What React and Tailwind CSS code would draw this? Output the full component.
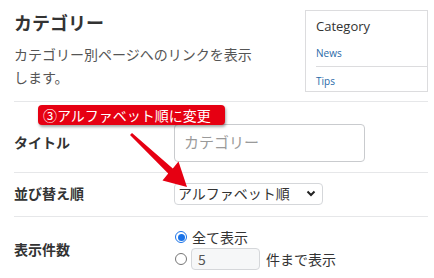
const jp = { fontFamily: '"Noto Sans CJK JP", "Noto Sans", sans-serif' };

const Radio = ({ checked }) => (
  <span
    className={
      checked
        ? "w-[12px] h-[12px] rounded-full border-[1.5px] border-[#1a73e8] flex items-center justify-center bg-white shrink-0"
        : "w-[12px] h-[12px] rounded-full border border-[#767676] bg-white shrink-0"
    }
  >
    {checked && <span className="w-[7px] h-[7px] rounded-full bg-[#1a73e8]" />}
  </span>
);

export default function App() {
  return (
    <div
      className="relative w-[434px] h-[278px] overflow-hidden bg-white pl-[14px] pr-[6px] text-[#333]"
      style={jp}
    >
      {/* HEADER */}
      <div className="flex justify-between h-[101px]">
        <div className="w-[240px] pt-[8px]">
          <h1 className="text-[18px] leading-[28px] font-bold text-[#333]">カテゴリー</h1>
          <p className="mt-[7px] text-[14px] leading-[23px] text-[#555]">
            カテゴリー別ページへのリンクを表示します。
          </p>
        </div>

        {/* PREVIEW */}
        <div
          className="mt-[10px] w-[123px] h-[82px] border border-[#dcdcde] bg-white"
          style={{ fontFamily: '"Open Sans", "Noto Sans", sans-serif' }}
        >
          <div className="pl-[10px] pt-[5px] text-[13px] leading-[20px] text-[#333]">Category</div>
          <ul className="pl-[10px] mt-[10px]">
            <li className="text-[10px] leading-[14px] text-[#2a6aa8] pb-[6px] border-b border-[#dcdcde]">
              News
            </li>
            <li className="text-[10px] leading-[14px] text-[#2a6aa8] pt-[7px]">Tips</li>
          </ul>
        </div>
      </div>

      {/* ROWS */}
      <div className="border-t border-[#e6e7e9] flex items-center h-[71px] pt-[21px] pb-[10px]">
        <div className="w-[160px] text-[14px] font-bold">タイトル</div>
        <div className="w-[191px] h-[38px] border border-[#c9cbce] rounded-[4px] flex items-center px-[9px] text-[15px] text-[#9a9a9a]">
          カテゴリー
        </div>
      </div>

      <div className="border-t border-[#e6e7e9] flex items-center h-[44px] pt-[9px] pb-[11px]">
        <div className="w-[160px] text-[14px] font-bold">並び替え順</div>
        <div className="w-[149px] h-[22px] border border-[#d5d7da] rounded-[4px] flex items-center justify-between pl-[3px] pr-[6px] text-[14px] text-[#333]">
          <span>アルファベット順</span>
          <svg width="10" height="7" viewBox="0 0 10 7">
            <path d="M1.5 1.5 L5 5 L8.5 1.5" fill="none" stroke="#222" strokeWidth="2" />
          </svg>
        </div>
      </div>

      <div className="border-t border-[#e6e7e9] flex items-center pt-[11px]">
        <div className="w-[160px] text-[14px] font-bold">表示件数</div>
        <div className="flex flex-col">
          <label className="flex items-center h-[18px] gap-[5px] pl-[1px] text-[14px]">
            <Radio checked />
            <span>全て表示</span>
          </label>
          <label className="flex items-center mt-[2px] gap-[4px] pl-[1px] text-[14px]">
            <Radio />
            <span className="w-[69px] h-[22px] border border-[#d5d7da] rounded-[4px] bg-[#f6f7f8] flex items-center px-[6px] text-[#555]">
              5
            </span>
            <span className="ml-[2px]">件まで表示</span>
          </label>
        </div>
      </div>

      {/* CALLOUT */}
      <div className="absolute left-[38px] top-[105px] w-[187px] h-[20px] rounded-[4px] bg-[#e60012] shadow-[1px_2px_3px_rgba(0,0,0,0.35)] px-[5px] text-[14px] leading-[20px] text-white">
        ③アルファベット順に変更
      </div>

      {/* ARROW */}
      <svg className="absolute left-0 top-0 pointer-events-none" width="434" height="278">
        <polygon
          points="130,135 132,133 172.8,168.6 178.5,161.5 187,187 162.5,180.5 168.2,173.4"
          fill="#e60012"
        />
      </svg>
    </div>
  );
}
